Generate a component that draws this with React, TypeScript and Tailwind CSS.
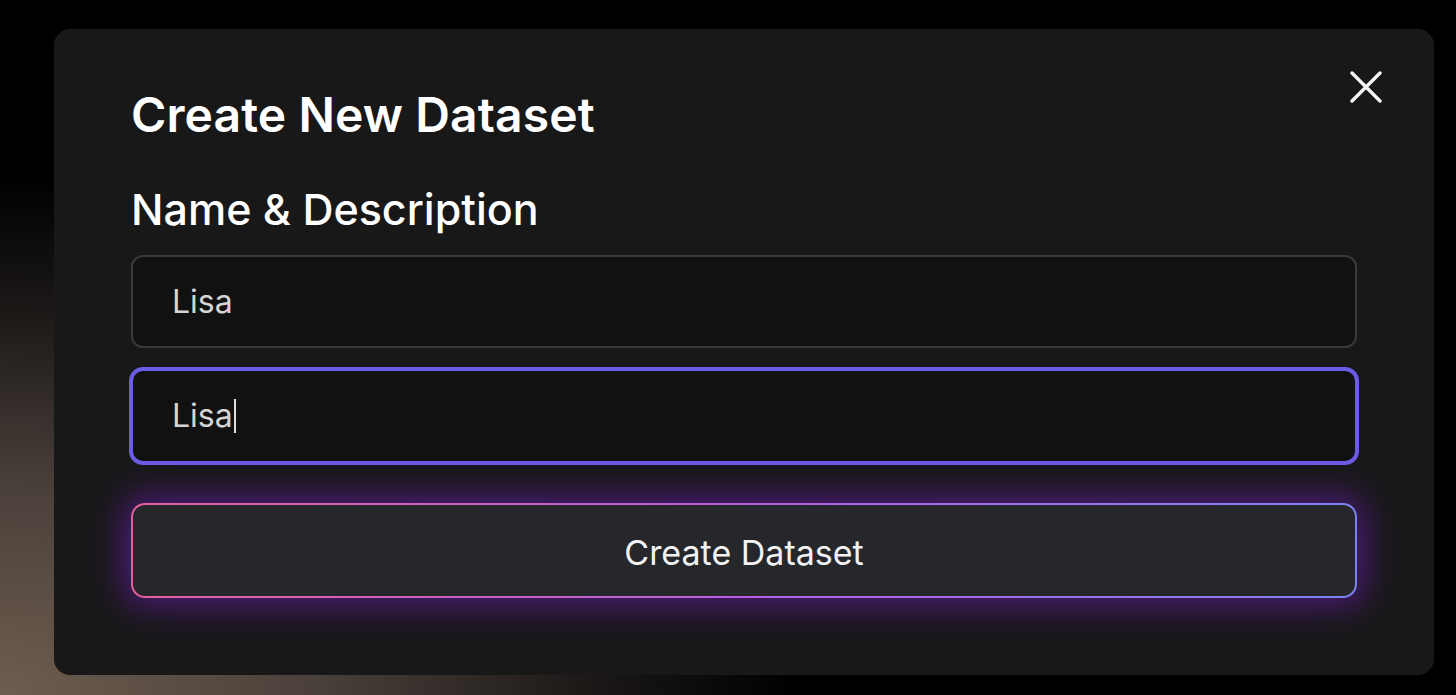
const CloseIcon = () => (
  <svg width="32" height="32" viewBox="0 0 32 32" fill="none">
    <path
      d="M2 2 L30 30 M30 2 L2 30"
      stroke="#f5f5f5"
      strokeWidth="3.4"
      strokeLinecap="round"
    />
  </svg>
);

const App = () => {
  return (
    <div
      className="w-[1456px] h-[695px] overflow-hidden bg-black bg-[radial-gradient(ellipse_55%_75%_at_0%_100%,#6e5d4f_0%,#4a403a_40%,#1a1716_75%,#000_100%)] pt-[29px] pl-[54px]"
      style={{ fontFamily: "Inter, 'Noto Sans', sans-serif" }}
    >
      <div className="relative w-[1380px] h-[646px] rounded-[16px] bg-[#181818] pt-[62px] px-[77px]">
        <button className="absolute top-[42px] right-[52px]">
          <CloseIcon />
        </button>

        <h1 className="text-[48px] leading-[48px] font-semibold text-white tracking-[0.1px]">
          Create New Dataset
        </h1>
        <h2 className="mt-[48px] text-[43px] leading-[44px] font-medium text-white">
          Name &amp; Description
        </h2>

        <div className="mt-[24px] h-[93px] rounded-[12px] border-2 border-[#3a3a3a] bg-[#111111] flex items-center pl-[39px]">
          <span className="text-[32px] text-[#d4d4d4]">Lisa</span>
        </div>

        <div className="mt-[19px] -mx-[2px] h-[98px] rounded-[14px] border-4 border-[#6c5be4] bg-[#111111] flex items-center pl-[39px]">
          <span className="text-[32px] text-[#d4d4d4]">Lisa</span>
          <span className="ml-[1px] w-[2px] h-[34px] bg-[#e0e0e0]" />
        </div>

        <div className="mt-[38px] rounded-[14px] p-[2px] bg-gradient-to-r from-[#e4609c] via-[#b55fde] to-[#7b82f2] shadow-[0_0_34px_8px_rgba(120,30,200,0.55)]">
          <div className="h-[91px] rounded-[12px] bg-[#26272b] flex items-center justify-center">
            <span className="text-[34px] text-[#f2f2f2] pt-[3px]">Create Dataset</span>
          </div>
        </div>
      </div>
    </div>
  );
};

export default App;
